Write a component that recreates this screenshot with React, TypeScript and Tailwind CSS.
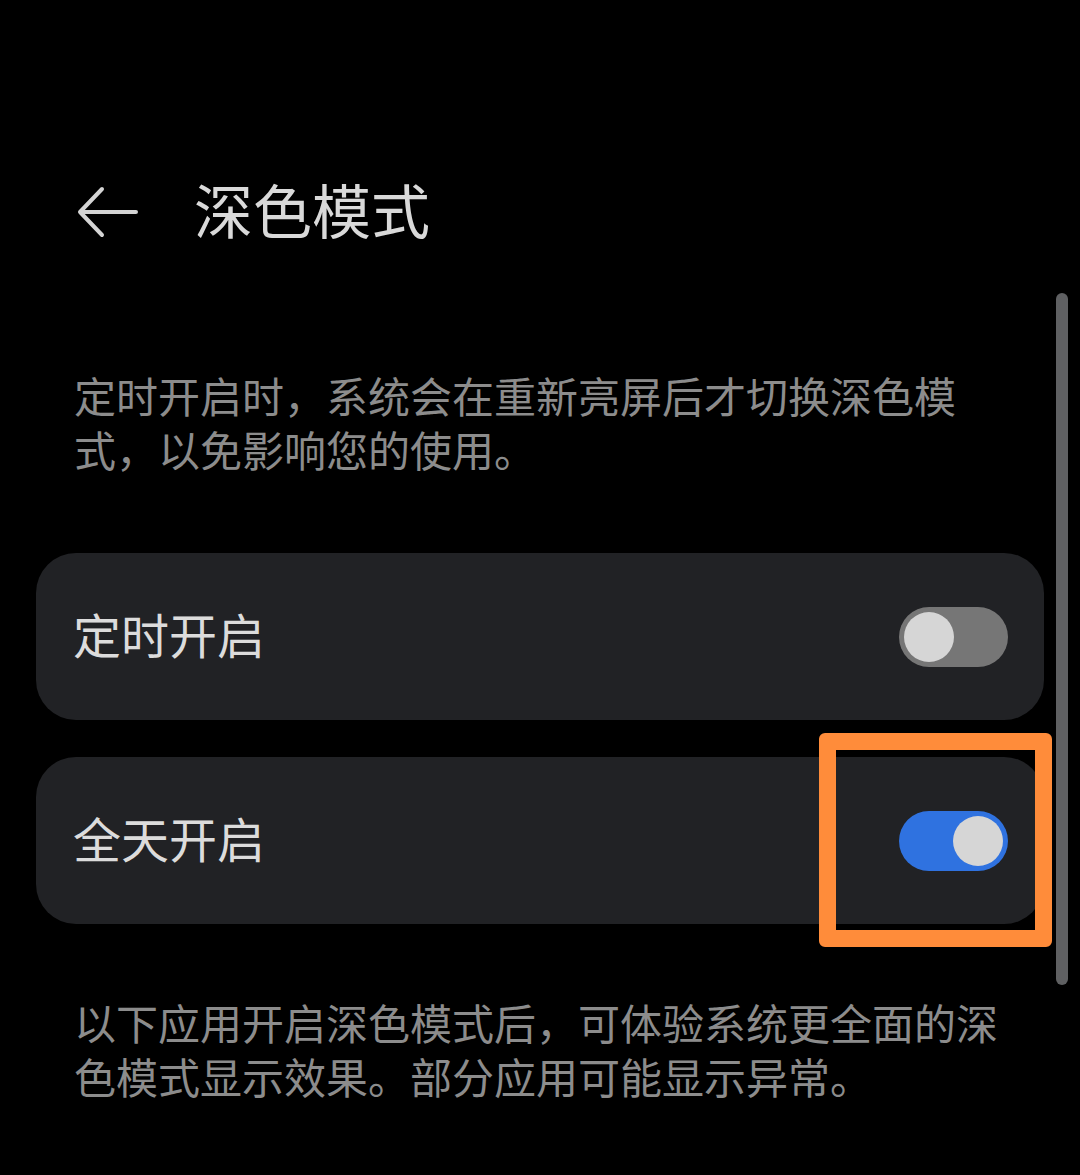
import React, { useState } from "react";

const FONT = {
  fontFamily: '"Noto Sans CJK SC", "Noto Sans", sans-serif',
};

function Toggle({ on, onChange }: { on: boolean; onChange: () => void }) {
  return (
    <button
      onClick={onChange}
      className={`relative w-[109px] h-[60px] rounded-full shrink-0 ${
        on ? "bg-[#2f72e0]" : "bg-[#767676]"
      }`}
    >
      <span
        className={`absolute top-[5px] w-[50px] h-[50px] rounded-full bg-[#d6d6d6] ${
          on ? "right-[5px]" : "left-[5px]"
        }`}
      />
    </button>
  );
}

function SettingRow({
  label,
  on,
  onChange,
}: {
  label: string;
  on: boolean;
  onChange: () => void;
}) {
  return (
    <div className="mx-[36px] h-[167px] rounded-[40px] bg-[#212225] flex items-center justify-between pl-[37px] pr-[36px]">
      <span className="pb-[8px] text-[48px] leading-none text-[#dcdcdc]">
        {label}
      </span>
      <Toggle on={on} onChange={onChange} />
    </div>
  );
}

export default function App() {
  const [scheduled, setScheduled] = useState(false);
  const [allDay, setAllDay] = useState(true);

  return (
    <div
      className="relative w-[1080px] h-[1175px] bg-black overflow-hidden"
      style={FONT}
    >
      {/* header */}
      <div className="flex items-center h-[70px] mt-[176px] pl-[76px]">
        <svg
          width="62"
          height="52"
          viewBox="0 0 62 52"
          fill="none"
          stroke="#d4d4d4"
          strokeWidth="4"
          strokeLinecap="round"
          strokeLinejoin="round"
          className="mt-[2px]"
        >
          <path d="M60 26H4M26 3L4 26l22 23" />
        </svg>
        <h1 className="ml-[56px] pb-[6px] text-[59px] leading-none text-[#d9d9d9] font-normal">
          深色模式
        </h1>
      </div>

      <p className="mt-[122px] px-[74px] pr-[100px] text-[42px] leading-[54px] text-[#8c8c8c]">
        定时开启时，系统会在重新亮屏后才切换深色模式，以免影响您的使用。
      </p>

      <div className="mt-[77px] flex flex-col gap-[37px]">
        <SettingRow
          label="定时开启"
          on={scheduled}
          onChange={() => setScheduled(!scheduled)}
        />
        <SettingRow
          label="全天开启"
          on={allDay}
          onChange={() => setAllDay(!allDay)}
        />
      </div>

      <p className="mt-[71px] px-[74px] pr-[60px] text-[42px] leading-[54px] text-[#8c8c8c]">
        以下应用开启深色模式后，可体验系统更全面的深色模式显示效果。部分应用可能显示异常。
      </p>

      {/* scroll indicator */}
      <div className="absolute left-[1056px] top-[293px] w-[12px] h-[692px] rounded-full bg-[#5f6062]" />

      {/* highlight frame */}
      <div className="absolute left-[819px] top-[733px] w-[233px] h-[214px] border-[17px] border-[#ff8c3a] rounded-[6px]" />
    </div>
  );
}
